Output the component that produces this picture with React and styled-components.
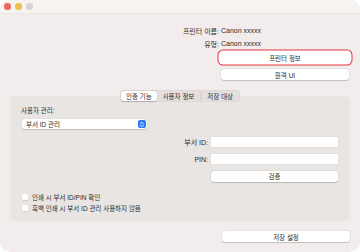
import styled, { createGlobalStyle } from 'styled-components';

const Global = createGlobalStyle`
  html, body { margin: 0; padding: 0; background: #ffffff; }
  body { font-family: "Liberation Sans", "Noto Sans CJK KR", sans-serif; color: #2b2b2b; }
`;

const Window = styled.div`
  width: 360px;
  height: 252px;
  background: #f2edec;
  border-radius: 10px;
  overflow: hidden;
  display: flex;
  flex-direction: column;
  font-size: 7px;
`;

const TitleBar = styled.div`
  height: 14px;
  flex: none;
  background: #f7f3f1;
  border-bottom: 1px solid #ebe6e4;
  box-sizing: border-box;
  display: flex;
  align-items: center;
  gap: 4.5px;
  padding-left: 4px;
`;

const Light = styled.span`
  width: 6.5px;
  height: 6.5px;
  border-radius: 50%;
  background: ${p => p.color};
`;

const Body = styled.div`
  display: flex;
  flex-direction: column;
  padding: 10px 10px 0 10px;
`;

const InfoGrid = styled.div`
  display: grid;
  grid-template-columns: 209px 1fr;
  column-gap: 2px;
  grid-auto-rows: 13px;
  align-items: center;
`;

const Label = styled.span`
  text-align: right;
  white-space: nowrap;
`;

const ButtonStack = styled.div`
  display: flex;
  flex-direction: column;
  gap: 6px;
  margin: 2px 0 0 211px;
`;

const Button = styled.button`
  all: unset;
  box-sizing: border-box;
  width: ${p => p.w || 128}px;
  height: 11px;
  background: #ffffff;
  border-radius: 3px;
  box-shadow: ${p => p.focused
    ? '0 0 0 1.5px #ffffff, 0 0 0 2.5px #e0323c'
    : '0 0.5px 1px rgba(0,0,0,0.18), 0 0 0 0.5px rgba(0,0,0,0.06)'};
  display: flex;
  align-items: center;
  justify-content: center;
  font-size: 6.5px;
  color: #2b2b2b;
  margin-left: ${p => p.ml || 0}px;
`;

const TabsRow = styled.div`
  display: flex;
  justify-content: center;
  margin-top: 10px;
  margin-bottom: -6px;
  position: relative;
  z-index: 1;
`;

const Tabs = styled.div`
  display: flex;
  align-items: center;
  height: 12px;
  padding: 1px;
  box-sizing: border-box;
  background: #e4dfde;
  border-radius: 4px;
  box-shadow: inset 0 0 0 0.5px rgba(0,0,0,0.06);
`;

const Tab = styled.div`
  height: 10px;
  padding: 0 ${p => p.pad || 6}px;
  display: flex;
  align-items: center;
  font-size: 6.5px;
  border-radius: 3px;
  background: ${p => (p.active ? '#ffffff' : 'transparent')};
  box-shadow: ${p => (p.active ? '0 0.5px 1px rgba(0,0,0,0.2)' : 'none')};
  border-left: ${p => (p.sep ? '1px solid #d2cdcc' : 'none')};
`;

const Group = styled.div`
  background: #e9e5e3;
  border-radius: 5px;
  height: 125px;
  margin-right: 0;
  box-sizing: border-box;
  padding: 11px 0 0 11px;
  display: flex;
  flex-direction: column;
`;

const SmallLabel = styled.div`
  font-size: 6.5px;
  line-height: 8px;
`;

const Select = styled.div`
  margin-top: 4px;
  margin-left: 1px;
  width: 125px;
  height: 10px;
  background: #ffffff;
  border-radius: 3px;
  box-shadow: 0 0.5px 1px rgba(0,0,0,0.18);
  display: flex;
  align-items: center;
  justify-content: space-between;
  padding: 0 1px 0 4px;
  box-sizing: border-box;
  font-size: 6.5px;
`;

const Stepper = styled.span`
  width: 8px;
  height: 8px;
  border-radius: 2px;
  background: #2f7cf6;
  display: flex;
  align-items: center;
  justify-content: center;
`;

const FieldGrid = styled.div`
  display: grid;
  grid-template-columns: 187px 127px;
  column-gap: 3px;
  row-gap: 7px;
  grid-auto-rows: 10px;
  align-items: center;
  margin-top: 8px;
`;

const Field = styled.div`
  height: 10px;
  background: #ffffff;
  box-shadow: 0 0 0 0.5px rgba(0,0,0,0.05);
`;

const Checks = styled.div`
  display: flex;
  flex-direction: column;
  gap: 4px;
  margin-top: 12px;
  margin-left: 1px;
`;

const CheckRow = styled.label`
  display: flex;
  align-items: center;
  gap: 4px;
  font-size: 6.5px;
  height: 7px;
`;

const Box = styled.span`
  width: 6px;
  height: 6px;
  background: #ffffff;
  border-radius: 1.5px;
  box-shadow: 0 0.5px 1px rgba(0,0,0,0.2);
`;

const Footer = styled.div`
  display: flex;
  margin-top: 10px;
`;

export default function App() {
  return (
    <>
      <Global />
      <Window>
        <TitleBar>
          <Light color="#ec6a5e" />
          <Light color="#f1bd4e" />
          <Light color="#d8d4d2" />
        </TitleBar>
        <Body>
          <InfoGrid>
            <Label>프린터 이름:</Label>
            <span>Canon xxxxx</span>
            <Label>유형:</Label>
            <span>Canon xxxxx</span>
          </InfoGrid>
          <ButtonStack>
            <Button focused w={130} style={{ marginLeft: -1 }}>프린터 정보</Button>
            <Button>원격 UI</Button>
          </ButtonStack>
          <TabsRow>
            <Tabs>
              <Tab active pad={5}>인증 기능</Tab>
              <Tab pad={6}>사용자 정보</Tab>
              <Tab sep pad={6}>저장 대상</Tab>
            </Tabs>
          </TabsRow>
          <Group>
            <SmallLabel>사용자 관리:</SmallLabel>
            <Select>
              <span>부서 ID 관리</span>
              <Stepper>
                <svg width="6" height="7" viewBox="0 0 6 7">
                  <path d="M1.5 2.8 L3 1.3 L4.5 2.8 M1.5 4.2 L3 5.7 L4.5 4.2" stroke="#fff" strokeWidth="0.9" fill="none" strokeLinecap="round" strokeLinejoin="round" />
                </svg>
              </Stepper>
            </Select>
            <FieldGrid>
              <Label>부서 ID:</Label>
              <Field />
              <Label>PIN:</Label>
              <Field />
              <span />
              <Button w={127}>검증</Button>
            </FieldGrid>
            <Checks>
              <CheckRow><Box />인쇄 시 부서 ID/PIN 확인</CheckRow>
              <CheckRow><Box />흑백 인쇄 시 부서 ID 관리 사용하지 않음</CheckRow>
            </Checks>
          </Group>
          <Footer>
            <Button ml={212}>저장 설정</Button>
          </Footer>
        </Body>
      </Window>
    </>
  );
}
